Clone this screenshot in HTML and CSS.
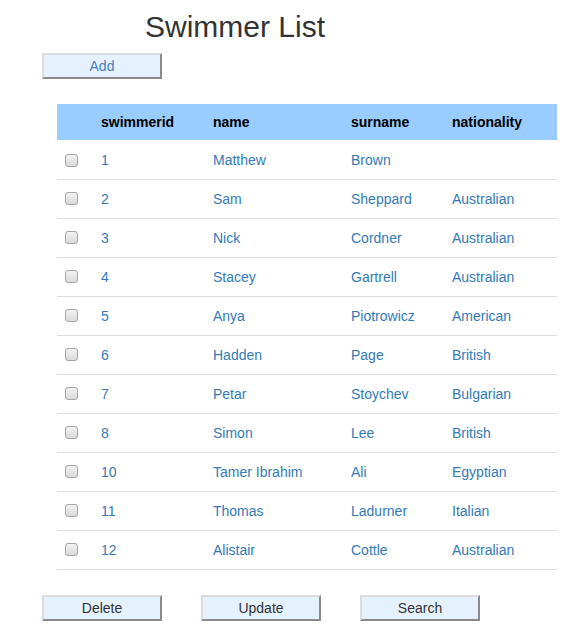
FILE: index.html
```html
<!DOCTYPE html>
<html>
<head>
<meta charset="utf-8">
<link rel="stylesheet" href="styles.css">
</head>
<body>
<div class="page">
  <h1 class="title">Swimmer List</h1>
  <div class="top-actions"><button class="btn btn-add">Add</button></div>
  <table class="grid">
    <colgroup>
      <col class="c-check"><col class="c-id"><col class="c-name"><col class="c-surname"><col class="c-nat">
    </colgroup>
    <thead>
      <tr><th></th><th>swimmerid</th><th>name</th><th>surname</th><th>nationality</th></tr>
    </thead>
    <tbody>
      <tr><td><input type="checkbox" class="chk"></td><td>1</td><td>Matthew</td><td>Brown</td><td></td></tr>
      <tr><td><input type="checkbox" class="chk"></td><td>2</td><td>Sam</td><td>Sheppard</td><td>Australian</td></tr>
      <tr><td><input type="checkbox" class="chk"></td><td>3</td><td>Nick</td><td>Cordner</td><td>Australian</td></tr>
      <tr><td><input type="checkbox" class="chk"></td><td>4</td><td>Stacey</td><td>Gartrell</td><td>Australian</td></tr>
      <tr><td><input type="checkbox" class="chk"></td><td>5</td><td>Anya</td><td>Piotrowicz</td><td>American</td></tr>
      <tr><td><input type="checkbox" class="chk"></td><td>6</td><td>Hadden</td><td>Page</td><td>British</td></tr>
      <tr><td><input type="checkbox" class="chk"></td><td>7</td><td>Petar</td><td>Stoychev</td><td>Bulgarian</td></tr>
      <tr><td><input type="checkbox" class="chk"></td><td>8</td><td>Simon</td><td>Lee</td><td>British</td></tr>
      <tr><td><input type="checkbox" class="chk"></td><td>10</td><td>Tamer Ibrahim</td><td>Ali</td><td>Egyptian</td></tr>
      <tr><td><input type="checkbox" class="chk"></td><td>11</td><td>Thomas</td><td>Ladurner</td><td>Italian</td></tr>
      <tr><td><input type="checkbox" class="chk"></td><td>12</td><td>Alistair</td><td>Cottle</td><td>Australian</td></tr>
    </tbody>
  </table>
  <div class="bottom-actions">
    <button class="btn">Delete</button>
    <button class="btn">Update</button>
    <button class="btn">Search</button>
  </div>
</div>
</body>
</html>
```

FILE: styles.css
```css
html, body {
  margin: 0;
  padding: 0;
  background: #fff;
}
body {
  font-family: "Liberation Sans", Arial, sans-serif;
  font-size: 14px;
  color: #333;
}
.page {
  padding: 9px 0 0 42px;
}
.title {
  margin: 0 0 0 103px;
  font-size: 30px;
  font-weight: normal;
  line-height: 36px;
  color: #333;
}
.top-actions {
  margin-top: 8px;
  display: flex;
}
.btn {
  box-sizing: border-box;
  width: 120px;
  height: 26px;
  padding: 0;
  margin: 0;
  font-family: "Liberation Sans", Arial, sans-serif;
  font-size: 14px;
  color: #333;
  background: #e5f1fd;
  border-style: solid;
  border-width: 2px;
  border-color: #dcdcdc #8a8a8a #8a8a8a #dcdcdc;
}
.btn-add {
  color: #4a7fbf;
}
.grid {
  margin: 25px 0 0 15px;
  width: 500px;
  table-layout: fixed;
  border-collapse: collapse;
}
.c-check { width: 36px; }
.c-id { width: 112px; }
.c-name { width: 138px; }
.c-surname { width: 101px; }
.c-nat { width: 113px; }
.grid th {
  background: #99ccff;
  color: #000;
  font-weight: bold;
  text-align: left;
  height: 36px;
  padding: 0 8px;
  box-sizing: border-box;
}
.grid td {
  color: #337ab7;
  height: 39px;
  padding: 0 8px;
  border-bottom: 1px solid #dddddd;
  box-sizing: border-box;
  vertical-align: middle;
}
.grid tbody tr:first-child td {
  padding-top: 2px;
}
.chk {
  appearance: none;
  -webkit-appearance: none;
  display: block;
  margin: 0;
  width: 13px;
  height: 13px;
  box-sizing: border-box;
  border: 1px solid #a6a6a6;
  border-radius: 3px;
  background: linear-gradient(#f2f2f2, #dadada);
}
.bottom-actions {
  margin-top: 25px;
  display: flex;
  gap: 39px;
}
```
